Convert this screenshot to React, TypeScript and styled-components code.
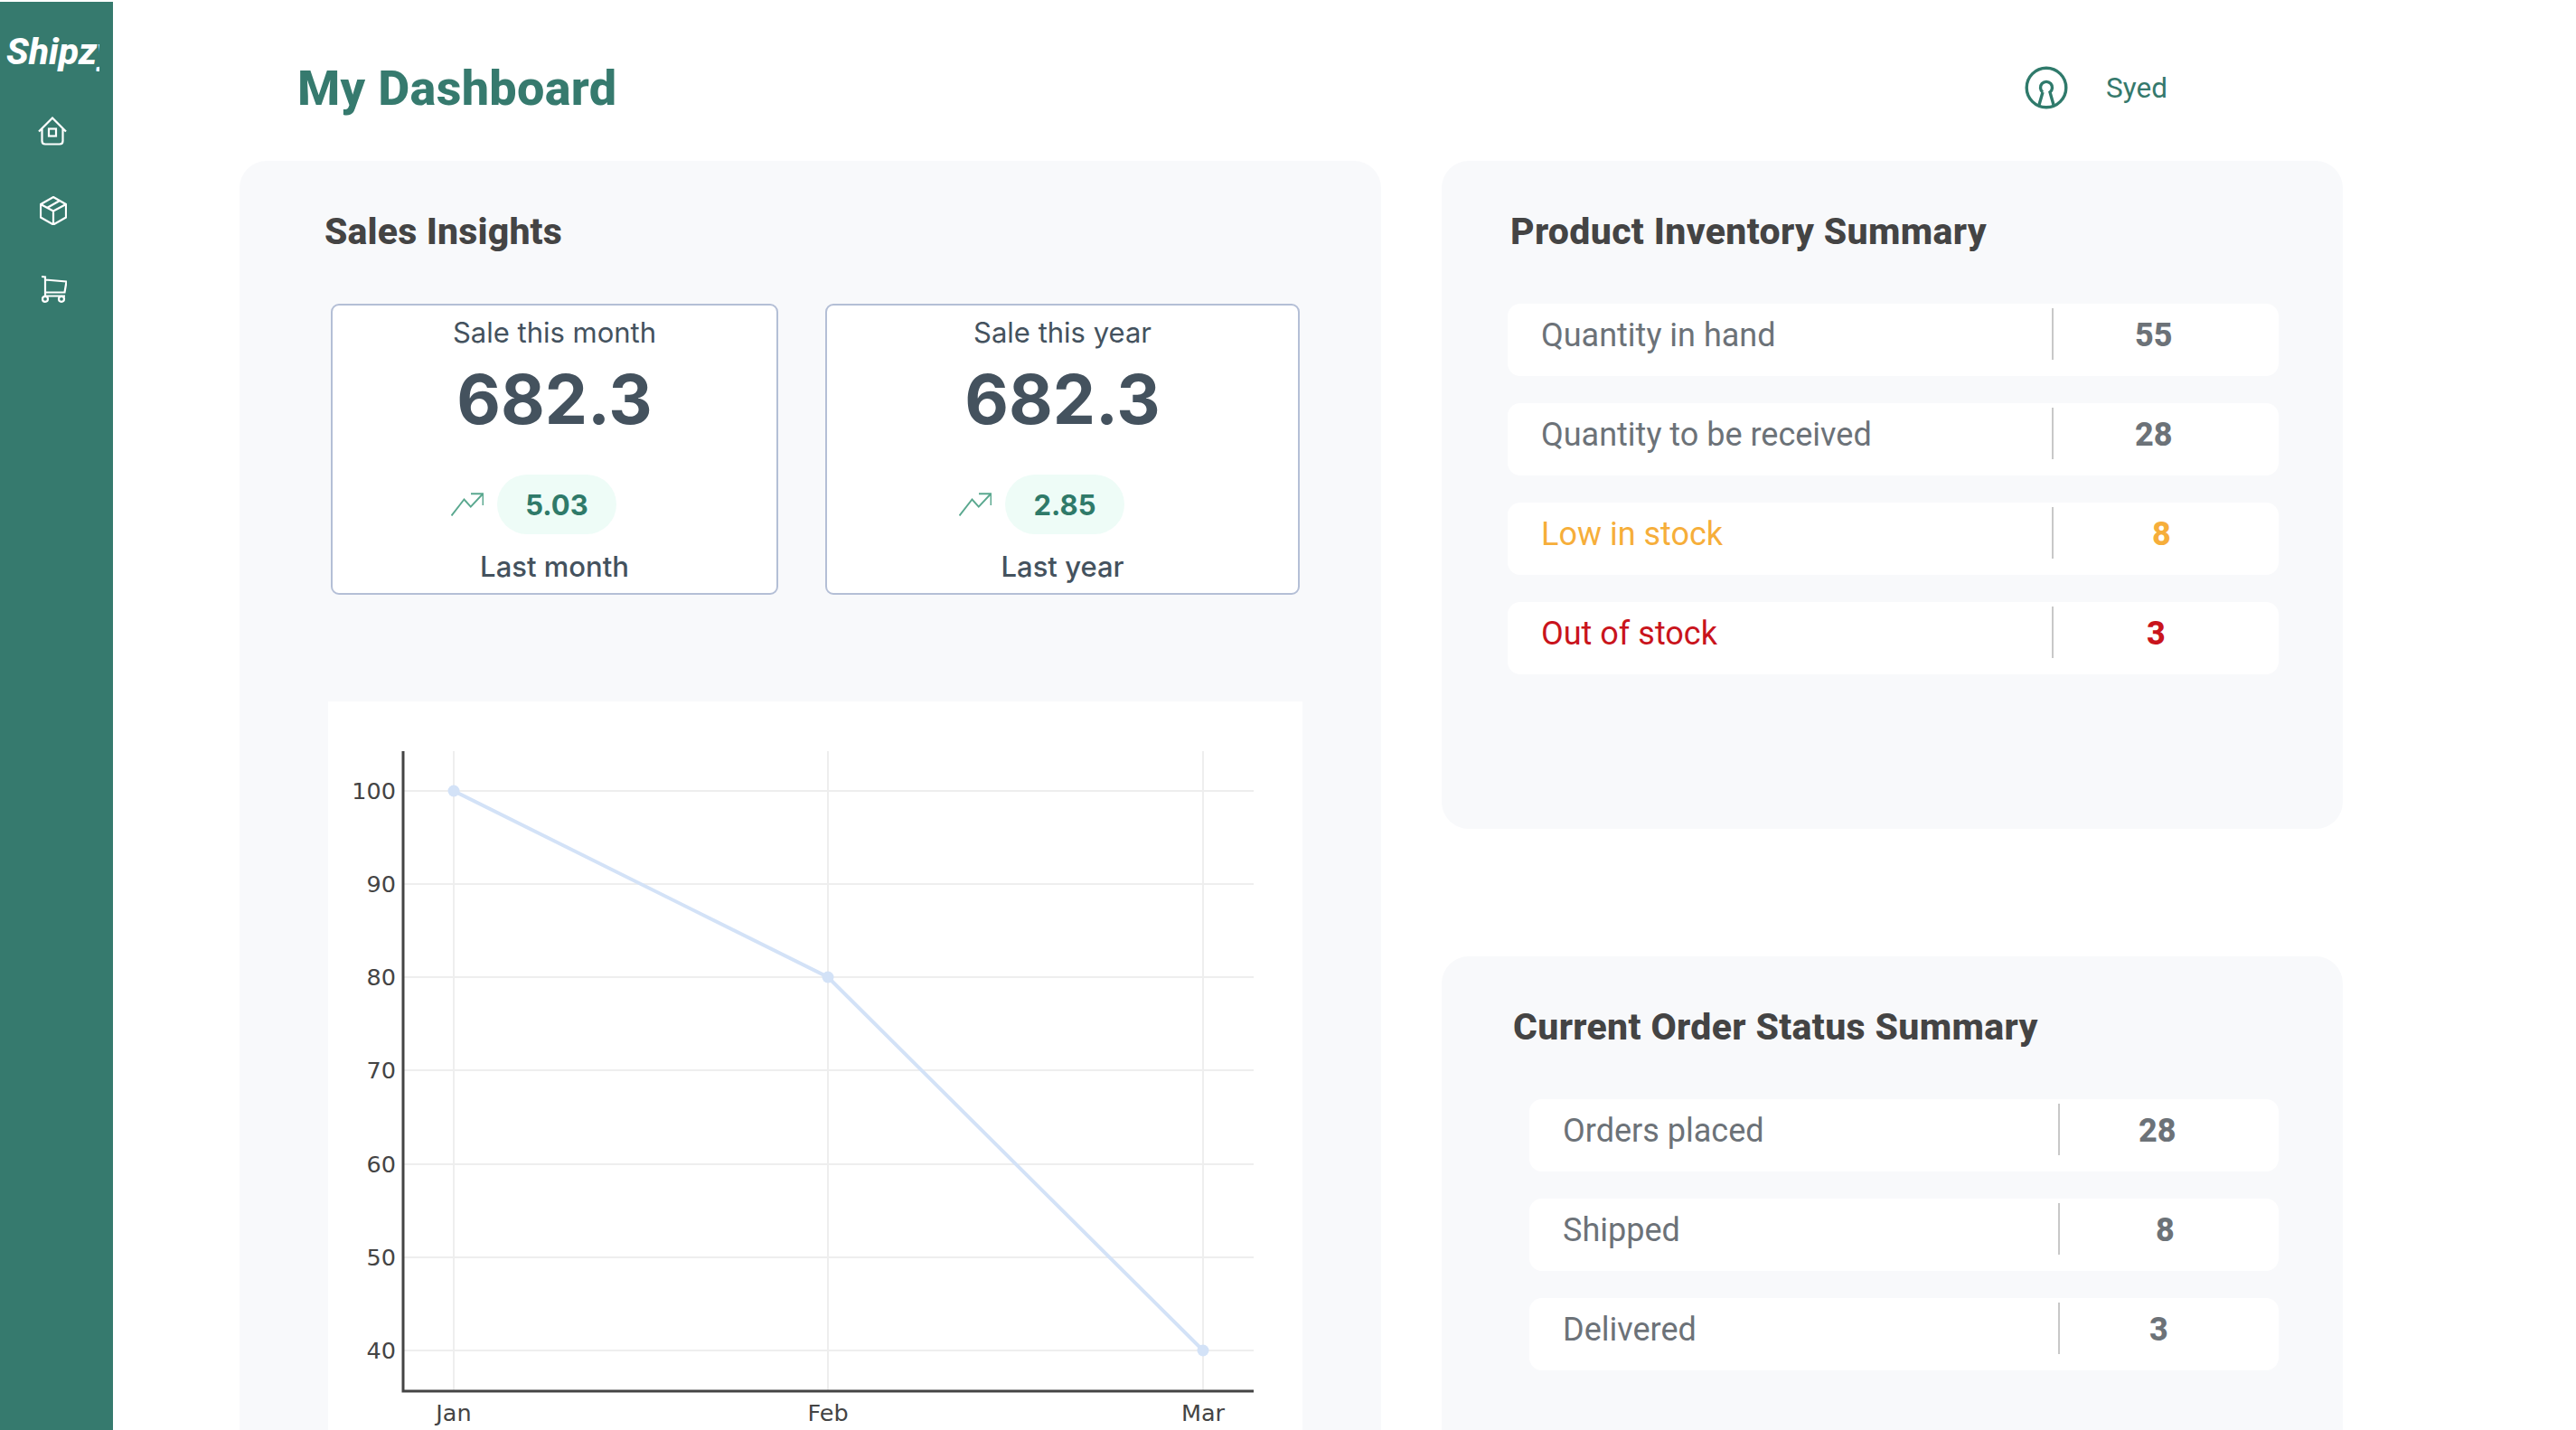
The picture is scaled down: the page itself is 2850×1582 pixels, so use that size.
import React from "react";
import styled, { createGlobalStyle } from "styled-components";

const GlobalStyle = createGlobalStyle`
  html, body {
    margin: 0;
    padding: 0;
    height: 100%;
    background: #ffffff;
  }
  * {
    box-sizing: border-box;
  }
`;

const plex = `Roboto, "Liberation Sans", sans-serif`;
const inter = `Inter, "Liberation Sans", sans-serif`;

const inventory = [
  { label: "Quantity in hand", value: "55", pad: 90 },
  { label: "Quantity to be received", value: "28", pad: 90 },
  { label: "Low in stock", value: "8", pad: 109, color: "#f6ae3a" },
  { label: "Out of stock", value: "3", pad: 103, color: "#c9141c" },
];

const orders = [
  { label: "Orders placed", value: "28", pad: 87 },
  { label: "Shipped", value: "8", pad: 106 },
  { label: "Delivered", value: "3", pad: 99 },
];

const App = () => {
  return (
    <Page>
      <GlobalStyle />
      <Sidebar>
        <Logo>Shipzy</Logo>
        <Nav>
          <NavIcon $shift={0} width="32" height="32" viewBox="0 0 32 32">
            <path d="M1 16.5 L16 1.5 L31 16.5 M4.5 13.5 V27 Q4.5 30.5 8 30.5 H24 Q27.5 30.5 27.5 27 V13.5" />
            <rect x="12" y="13.5" width="8" height="8" />
          </NavIcon>
          <NavIcon $shift={2} width="30" height="32" viewBox="0 0 30 32">
            <path d="M15 1 L29 9 V23.5 L15 31.5 L1 23.5 V9 Z M1 9 L15 16.5 L29 9 M15 16.5 V31.5 M22 5 L8 13" />
          </NavIcon>
          <NavIcon $shift={4} width="28" height="30" viewBox="0 0 28 30">
            <path d="M0 1 L4 1.5 V22.5 M4 4.5 L27.5 6.5 L25.5 18.5 H4 M4 22.5 H26" />
            <circle cx="4" cy="25.8" r="3" />
            <circle cx="22" cy="25.8" r="3" />
          </NavIcon>
        </Nav>
      </Sidebar>
      <Main>
        <Header>
          <PageTitle>My Dashboard</PageTitle>
          <User>
            <svg width="48" height="48" viewBox="0 0 48 48" fill="none" stroke="#2f7a6b" strokeWidth="3.4">
              <circle cx="24" cy="24" r="21.8" />
              <path d="M20 29 A6.5 6.5 0 1 1 28 29 L32 43 M20 29 L16 43" />
            </svg>
            <UserName>Syed</UserName>
          </User>
        </Header>
        <Columns>
          <SalesPanel>
            <SalesTitle>Sales Insights</SalesTitle>
            <StatRow>
              <StatCard $width={495}>
                <StatLabel>Sale this month</StatLabel>
                <StatNumber>682.3</StatNumber>
                <TrendRow>
                  <TrendIcon />
                  <TrendPill>5.03</TrendPill>
                </TrendRow>
                <StatFoot>Last month</StatFoot>
              </StatCard>
              <StatCard $width={525}>
                <StatLabel>Sale this year</StatLabel>
                <StatNumber>682.3</StatNumber>
                <TrendRow>
                  <TrendIcon />
                  <TrendPill>2.85</TrendPill>
                </TrendRow>
                <StatFoot>Last year</StatFoot>
              </StatCard>
            </StatRow>
            <ChartBox>
              <SalesChart />
            </ChartBox>
          </SalesPanel>
          <RightColumn>
            <InventoryPanel>
              <SummaryTitle $left={76}>Product Inventory Summary</SummaryTitle>
              <RowList $left={73}>
                {inventory.map((row) => (
                  <SummaryRow key={row.label} $labelWidth={602} $inset={37}>
                    <RowLabel $color={row.color}>{row.label}</RowLabel>
                    <RowValue $color={row.color} $pad={row.pad}>
                      {row.value}
                    </RowValue>
                  </SummaryRow>
                ))}
              </RowList>
            </InventoryPanel>
            <OrdersPanel>
              <SummaryTitle $left={79}>Current Order Status Summary</SummaryTitle>
              <RowList $left={97}>
                {orders.map((row) => (
                  <SummaryRow key={row.label} $labelWidth={585} $inset={37}>
                    <RowLabel>{row.label}</RowLabel>
                    <RowValue $pad={row.pad}>{row.value}</RowValue>
                  </SummaryRow>
                ))}
              </RowList>
            </OrdersPanel>
          </RightColumn>
        </Columns>
      </Main>
    </Page>
  );
};

const TrendIcon = () => (
  <svg width="36" height="26" viewBox="0 0 36 26" fill="none" stroke="#5aa88f" strokeWidth="1.9">
    <path d="M0.5 25.5 L14.5 7.5 L21.8 15.7 L35 1.5 M22 1.3 H35.5 V14" />
  </svg>
);

const chartY = [
  { label: "100", y: 99 },
  { label: "90", y: 202 },
  { label: "80", y: 305 },
  { label: "70", y: 408 },
  { label: "60", y: 512 },
  { label: "50", y: 615 },
  { label: "40", y: 718 },
];

const chartX = [
  { label: "Jan", x: 139 },
  { label: "Feb", x: 553 },
  { label: "Mar", x: 968 },
];

const SalesChart = () => (
  <svg width="1078" height="830" viewBox="0 0 1078 830">
    {chartY.map((t) => (
      <line key={t.label} x1="83" x2="1024" y1={t.y} y2={t.y} stroke="#eeeeee" strokeWidth="2" />
    ))}
    {chartX.map((t) => (
      <line key={t.label} x1={t.x} x2={t.x} y1="55" y2="763" stroke="#eeeeee" strokeWidth="2" />
    ))}
    <path d="M139 99 L553 305 L968 718" fill="none" stroke="#d3e2f7" strokeWidth="4" />
    <circle cx="139" cy="99" r="6.5" fill="#d3e2f7" />
    <circle cx="553" cy="305" r="6.5" fill="#d3e2f7" />
    <circle cx="968" cy="718" r="6.5" fill="#d3e2f7" />
    <path d="M83 55 V763 H1024" fill="none" stroke="#444444" strokeWidth="3" />
    {chartY.map((t) => (
      <ChartText key={t.label} x="75" y={t.y + 9} textAnchor="end">
        {t.label}
      </ChartText>
    ))}
    {chartX.map((t) => (
      <ChartText key={t.label} x={t.x} y="796" textAnchor="middle">
        {t.label}
      </ChartText>
    ))}
  </svg>
);

const Page = styled.div`
  display: flex;
  width: 2850px;
  height: 1582px;
  overflow: hidden;
`;

const Sidebar = styled.aside`
  flex: none;
  width: 125px;
  margin-top: 2px;
  padding-top: 31px;
  background: #367a6e;
`;

const Logo = styled.div`
  width: 110px;
  height: 48px;
  padding-left: 7px;
  overflow: hidden;
  font-family: ${plex};
  font-size: 41px;
  font-style: italic;
  font-weight: 800;
  line-height: 48px;
  white-space: nowrap;
  color: #ffffff;
`;

const Nav = styled.nav`
  display: flex;
  flex-direction: column;
  align-items: flex-start;
  gap: 56px;
  margin-top: 48px;
  padding-left: 42px;
`;

const NavIcon = styled.svg<{ $shift: number }>`
  margin-left: ${(p) => p.$shift}px;
  fill: none;
  stroke: #ffffff;
  stroke-width: 2.2;
`;

const Main = styled.main`
  flex: 1;
  padding-left: 140px;
`;

const Header = styled.header`
  display: flex;
  align-items: center;
  justify-content: space-between;
  width: 2327px;
  height: 178px;
  padding: 16px 194px 0 64px;
`;

const PageTitle = styled.h1`
  margin: 0;
  font-family: ${plex};
  font-size: 54px;
  font-weight: 800;
  letter-spacing: 0.3px;
  color: #367a6e;
`;

const User = styled.div`
  display: flex;
  align-items: center;
  gap: 42px;
`;

const UserName = styled.span`
  font-family: ${plex};
  font-size: 31.5px;
  color: #35796c;
`;

const Columns = styled.div`
  display: grid;
  grid-template-columns: 1263px 997px;
  gap: 67px;
`;

const Panel = styled.section`
  background: #f8f9fb;
  border-radius: 30px;
`;

const SalesPanel = styled(Panel)`
  height: 1500px;
  padding: 53px 0 0 98px;
`;

const SalesTitle = styled.h2`
  margin: 0 0 0 -4px;
  font-family: ${plex};
  font-size: 41px;
  font-weight: 800;
  letter-spacing: 0.15px;
  line-height: 50px;
  color: #444444;
`;

const StatRow = styled.div`
  display: flex;
  gap: 52px;
  margin: 55px 0 0 3px;
`;

const StatCard = styled.div<{ $width: number }>`
  display: flex;
  flex-direction: column;
  align-items: center;
  width: ${(p) => p.$width}px;
  height: 322px;
  padding-top: 12px;
  background: #ffffff;
  border: 2px solid #b4bfd6;
  border-radius: 9px;
  color: #44525e;
  font-family: ${inter};
`;

const StatLabel = styled.div`
  font-size: 31px;
  line-height: 36px;
`;

const StatNumber = styled.div`
  margin-top: 18px;
  font-size: 75px;
  font-weight: 700;
  line-height: 76px;
`;

const TrendRow = styled.div`
  display: flex;
  align-items: center;
  gap: 15px;
  margin-top: 45px;
  padding-right: 46px;
`;

const TrendPill = styled.div`
  display: flex;
  align-items: center;
  justify-content: center;
  width: 132px;
  height: 66px;
  background: #eefcf7;
  border-radius: 33px;
  font-size: 31px;
  font-weight: 700;
  color: #2f7a69;
`;

const StatFoot = styled.div`
  margin-top: 18px;
  font-size: 31px;
  font-weight: 500;
  line-height: 36px;
`;

const ChartBox = styled.div`
  width: 1078px;
  height: 830px;
  margin: 118px 0 0 0;
  background: #ffffff;
`;

const ChartText = styled.text`
  font-family: "DejaVu Sans", sans-serif;
  font-size: 25.5px;
  fill: #444444;
`;

const RightColumn = styled.div`
  display: flex;
  flex-direction: column;
  gap: 141px;
`;

const InventoryPanel = styled(Panel)`
  height: 739px;
  padding-top: 53px;
`;

const OrdersPanel = styled(Panel)`
  height: 600px;
  padding-top: 53px;
`;

const SummaryTitle = styled.h2<{ $left: number }>`
  margin: 0 0 0 ${(p) => p.$left}px;
  font-family: ${plex};
  font-size: 41px;
  font-weight: 800;
  letter-spacing: 0.35px;
  line-height: 50px;
  color: #444444;
`;

const RowList = styled.div<{ $left: number }>`
  display: flex;
  flex-direction: column;
  gap: 30px;
  margin: 55px 71px 0 ${(p) => p.$left}px;
`;

const SummaryRow = styled.div<{ $labelWidth: number; $inset: number }>`
  display: grid;
  grid-template-columns: ${(p) => p.$labelWidth}px 1fr;
  height: 80px;
  padding-top: 5px;
  background: #ffffff;
  border-radius: 14px;

  & > :first-child {
    padding-left: ${(p) => p.$inset}px;
  }
`;

const RowLabel = styled.div<{ $color?: string }>`
  height: 57px;
  font-family: ${plex};
  font-size: 36px;
  line-height: 60px;
  color: ${(p) => p.$color || "#6c7278"};
`;

const RowValue = styled.div<{ $color?: string; $pad: number }>`
  height: 57px;
  padding-left: ${(p) => p.$pad}px;
  border-left: 2px solid #c8c8c8;
  font-family: ${plex};
  font-size: 36px;
  font-weight: 800;
  line-height: 60px;
  color: ${(p) => p.$color || "#6c7278"};
`;

export default App;
